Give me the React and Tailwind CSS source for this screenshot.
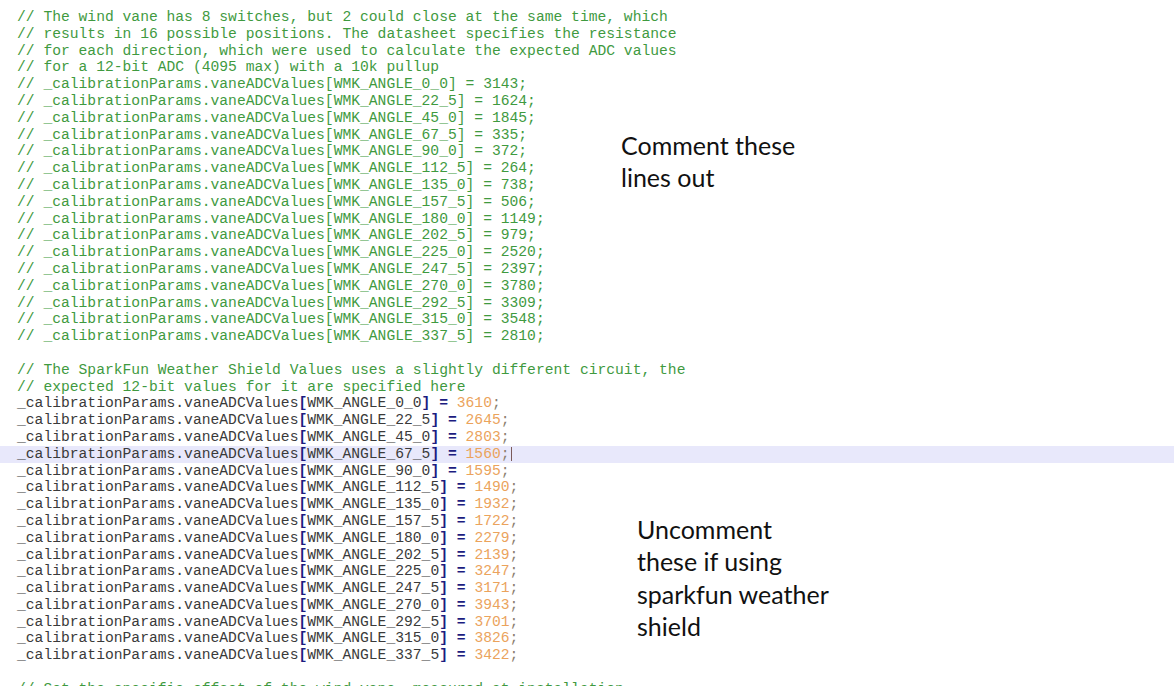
const commentedValues = [
  ['0_0', '3143'], ['22_5', '1624'], ['45_0', '1845'], ['67_5', '335'],
  ['90_0', '372'], ['112_5', '264'], ['135_0', '738'], ['157_5', '506'],
  ['180_0', '1149'], ['202_5', '979'], ['225_0', '2520'], ['247_5', '2397'],
  ['270_0', '3780'], ['292_5', '3309'], ['315_0', '3548'], ['337_5', '2810'],
];

const sparkfunValues = [
  ['0_0', '3610'], ['22_5', '2645'], ['45_0', '2803'], ['67_5', '1560'],
  ['90_0', '1595'], ['112_5', '1490'], ['135_0', '1932'], ['157_5', '1722'],
  ['180_0', '2279'], ['202_5', '2139'], ['225_0', '3247'], ['247_5', '3171'],
  ['270_0', '3943'], ['292_5', '3701'], ['315_0', '3826'], ['337_5', '3422'],
];

function Comment({ children }) {
  return <div className="pl-[17px] text-[#3f9a3f] whitespace-pre">{children}</div>;
}

function CodeLine({ angle, value, active }) {
  return (
    <div className={`pl-[17px] whitespace-pre text-[#3a3a3a] ${active ? 'bg-[#e8e8fb]' : ''}`}>
      _calibrationParams.vaneADCValues
      <span className="text-[#1c1c80] font-bold">[</span>
      WMK_ANGLE_{angle}
      <span className="text-[#1c1c80] font-bold">]</span>
      {' '}
      <span className="text-[#1c1c80] font-bold">=</span>
      {' '}
      <span className="text-[#eba35c]">{value}</span>
      <span className="text-[#8c7f70]">;</span>
      {active && <span className="inline-block w-px h-[14px] align-middle bg-[#7a5a5a] ml-px" />}
    </div>
  );
}

export default function App() {
  return (
    <div className="relative w-[1174px] h-[686px] overflow-hidden bg-white">
      <div className="pt-[9px] font-['Liberation_Mono',monospace] text-[14.67px] leading-[16.8px]">
        <Comment>// The wind vane has 8 switches, but 2 could close at the same time, which</Comment>
        <Comment>// results in 16 possible positions. The datasheet specifies the resistance</Comment>
        <Comment>// for each direction, which were used to calculate the expected ADC values</Comment>
        <Comment>// for a 12-bit ADC (4095 max) with a 10k pullup</Comment>
        {commentedValues.map(([a, v]) => (
          <Comment key={a}>{`// _calibrationParams.vaneADCValues[WMK_ANGLE_${a}] = ${v};`}</Comment>
        ))}
        <div className="h-[16.8px]" />
        <Comment>// The SparkFun Weather Shield Values uses a slightly different circuit, the</Comment>
        <Comment>// expected 12-bit values for it are specified here</Comment>
        {sparkfunValues.map(([a, v]) => (
          <CodeLine key={a} angle={a} value={v} active={a === '67_5'} />
        ))}
        <div className="h-[16.8px]" />
        <Comment>// Set the specific offset of the wind vane, measured at installation</Comment>
      </div>

      <div className="absolute left-[621px] top-[129px] font-['Lato','Open_Sans',sans-serif] text-[25px] leading-[32px] text-[#111]">
        <div>Comment these</div>
        <div>lines out</div>
      </div>

      <div className="absolute left-[637px] top-[513px] font-['Lato','Open_Sans',sans-serif] text-[25px] leading-[32.4px] text-[#111]">
        <div>Uncomment</div>
        <div>these if using</div>
        <div>sparkfun weather</div>
        <div>shield</div>
      </div>
    </div>
  );
}
